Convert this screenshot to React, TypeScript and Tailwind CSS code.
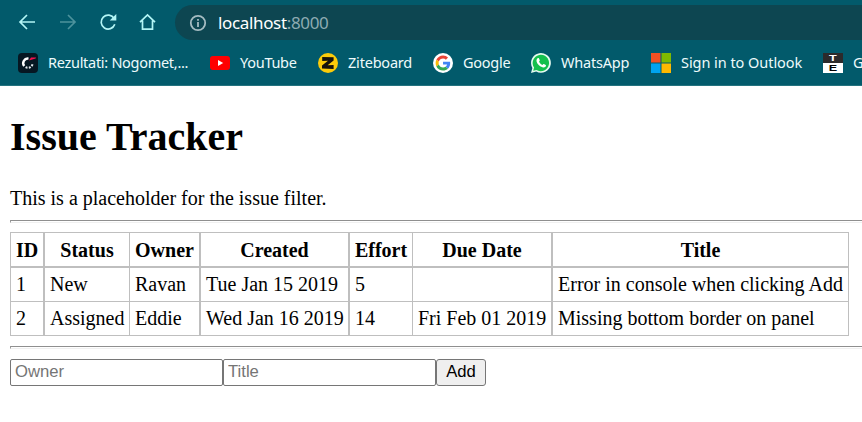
import React from "react";

const ui = "font-['Noto_Sans','Open_Sans',sans-serif]";

function Results() {
  return (
    <svg width="20" height="20" viewBox="0 0 20 20">
      <rect width="20" height="20" rx="4" fill="#061722" />
      <path d="M10.5 5.6A4.6 4.6 0 0 0 6.2 13" fill="none" stroke="#fff" strokeWidth="2.4" />
      <path d="M7.6 14.2A4.6 4.6 0 0 0 14.6 10" fill="none" stroke="#dfe6ea" strokeWidth="2" strokeDasharray="2 1.3" />
      <path d="M11 7.6L13 4.4H18.2L17.6 5.4Z" fill="#f5104f" />
    </svg>
  );
}

function YouTube() {
  return (
    <svg width="20" height="20" viewBox="0 0 20 20">
      <rect y="3" width="20" height="14" rx="3" fill="#f00" />
      <path d="M8 7L13.2 10L8 13Z" fill="#fff" />
    </svg>
  );
}

function Zite() {
  return (
    <svg width="20" height="20" viewBox="0 0 20 20">
      <circle cx="10" cy="10" r="10" fill="#fccb0a" />
      <path d="M4.2 4L15.6 4.3V7.4L9.6 12.3L15.6 12V16L4 15.6V12.6L10 7.8L4.2 8.1Z" fill="#17120c" />
    </svg>
  );
}

function Google() {
  return (
    <svg width="20" height="20" viewBox="0 0 20 20">
      <circle cx="10" cy="10" r="10" fill="#fff" />
      <g transform="translate(2.6 2.6) scale(.31)">
        <path fill="#EA4335" d="M24 9.5c3.54 0 6.71 1.22 9.21 3.6l6.85-6.85C35.9 2.38 30.47 0 24 0 14.62 0 6.51 5.38 2.56 13.22l7.98 6.19C12.43 13.72 17.74 9.5 24 9.5z" />
        <path fill="#4285F4" d="M46.98 24.55c0-1.57-.15-3.09-.38-4.55H24v9.02h12.94c-.58 2.96-2.26 5.48-4.78 7.18l7.73 6c4.51-4.18 7.09-10.36 7.09-17.65z" />
        <path fill="#FBBC05" d="M10.53 28.59c-.48-1.45-.76-2.99-.76-4.59s.27-3.14.76-4.59l-7.98-6.19C.92 16.46 0 20.12 0 24c0 3.88.92 7.54 2.56 10.78l7.97-6.19z" />
        <path fill="#34A853" d="M24 48c6.48 0 11.93-2.13 15.89-5.81l-7.73-6c-2.15 1.45-4.92 2.3-8.16 2.3-6.26 0-11.57-4.22-13.47-9.91l-7.98 6.19C6.51 42.62 14.62 48 24 48z" />
      </g>
    </svg>
  );
}

function WhatsApp() {
  return (
    <svg width="20" height="20" viewBox="0 0 20 20">
      <path d="M0 20L1.4 14.9A9.9 9.9 0 1 1 5.2 18.6Z" fill="#e6fbf0" />
      <path d="M2.2 17.8L3.1 14.6A8.2 8.2 0 1 1 5.5 16.9Z" fill="#14c04d" />
      <path d="M6.6 5.3C7.1 5 7.8 5 8 5.5L8.8 7.3C8.9 7.8 8.4 8.3 8 8.8C8.9 10.5 10 11.3 11.5 12C12 11.5 12.4 10.8 12.9 11L14.8 11.9C15.2 12.3 14.9 13.5 14.2 14C12.5 15.1 10 14.1 8 12.3C6 10.4 4.3 7.5 6.6 5.3Z" fill="#fff" />
    </svg>
  );
}

function Microsoft() {
  return (
    <svg width="20" height="20" viewBox="0 0 20 20">
      <rect width="9.5" height="9.5" fill="#f25022" />
      <rect x="10.5" width="9.5" height="9.5" fill="#7fba00" />
      <rect y="10.5" width="9.5" height="9.5" fill="#00a4ef" />
      <rect x="10.5" y="10.5" width="9.5" height="9.5" fill="#ffb900" />
    </svg>
  );
}

function TE() {
  return (
    <span className="flex h-5 w-5 flex-col font-['Liberation_Sans',sans-serif] text-[9px] leading-[10px] font-bold">
      <span className="flex h-[10px] justify-center bg-[#2c2a2b] text-white"><span className="scale-x-140">T</span></span>
      <span className="flex h-[10px] justify-center bg-white text-black"><span className="scale-x-140">E</span></span>
    </span>
  );
}

const bookmarks = [
  { label: "Rezultati: Nogomet,...", icon: <Results />, box: "w-[192px]", text: "tracking-[-0.29px]" },
  { label: "YouTube", icon: <YouTube />, box: "w-[108px]", text: "tracking-[-0.28px]" },
  { label: "Ziteboard", icon: <Zite />, box: "w-[115px]", text: "tracking-[-0.2px]" },
  { label: "Google", icon: <Google />, box: "w-[98px]", text: "tracking-[-0.25px]" },
  { label: "WhatsApp", icon: <WhatsApp />, box: "w-[120px]", text: "tracking-[-0.2px]" },
  { label: "Sign in to Outlook", icon: <Microsoft />, box: "w-[172px]", text: "tracking-[-0.05px]" },
  { label: "G", icon: <TE />, box: "w-[60px]", text: "" },
];

const columns = [
  { name: "ID", edge: "w-[34px] border-r-2" },
  { name: "Status", edge: "w-[85px] border-r" },
  { name: "Owner", edge: "w-[71px] border-r-2" },
  { name: "Created", edge: "w-[149px] border-r-2" },
  { name: "Effort", edge: "w-[63px] border-r" },
  { name: "Due Date", edge: "w-[140px] border-r-2" },
  { name: "Title", edge: "w-[296px] border-r" },
];

const issues = [
  ["1", "New", "Ravan", "Tue Jan 15 2019", "5", "", "Error in console when clicking Add"],
  ["2", "Assigned", "Eddie", "Wed Jan 16 2019", "14", "Fri Feb 01 2019", "Missing bottom border on panel"],
];

function Rule() {
  return <div className="h-[3px] border-t border-b border-l border-t-[#8f8f8f] border-b-[#f0f0f0] border-l-[#9a9a9a]" />;
}

export default function App() {
  return (
    <div className="h-[422px] w-[862px] overflow-hidden bg-white text-black">
      <header className={`h-[86px] border-b border-[#24737f] bg-[#025a6b] ${ui}`}>
        <div className="flex h-[45px] items-center">
          <svg className="shrink-0" width="175" height="45" fill="none" stroke="#b3f5f5" strokeWidth="1.7">
            <path d="M35 22H20.5M27 15L20 22L27 29" />
            <path d="M60 22H74.5M68 15L75 22L68 29" stroke="#4d929c" />
            <path d="M114.2 18.5A7 7 0 1 0 114.8 24.3" />
            <path d="M116.3 14V20.6H109.7Z" fill="#b3f5f5" stroke="none" />
            <path d="M140 22.2L147.5 15L155 22.2M142.5 20.5V29.2H152.5V20.5" />
          </svg>
          <div className="flex h-[35px] flex-1 items-center rounded-l-full bg-[#0d4651] pl-[14px]">
            <svg width="18" height="18" viewBox="0 0 18 18" fill="none" stroke="#a5bcc2" strokeWidth="1.8">
              <circle cx="9" cy="9" r="7.2" />
              <path d="M9 8V13M9 5V6.8" />
            </svg>
            <span className="ml-[11px] pb-px text-[17px] leading-none tracking-[-0.35px] whitespace-nowrap text-white">
              localhost<span className="text-[#8eabb1]">:8000</span>
            </span>
          </div>
        </div>
        <nav className="flex h-9 items-center pl-[18px]">
          {bookmarks.map((b) => (
            <div key={b.label} className={`flex shrink-0 items-center gap-[10px] ${b.box}`}>
              <span className="block h-5 w-5 shrink-0">{b.icon}</span>
              <span className={`pb-0.5 text-[14.5px] leading-[18px] whitespace-nowrap text-[#eefafb] ${b.text}`}>{b.label}</span>
            </div>
          ))}
        </nav>
      </header>
      <main className="pl-[10px] font-['Liberation_Serif',serif] text-[20px] leading-[23px]">
        <h1 className="pt-[28px] text-[40px] leading-[46px] font-bold">Issue Tracker</h1>
        <p className="pt-[27px] pb-[10px]">This is a placeholder for the issue filter.</p>
        <Rule />
        <table className="mt-[9px] w-[839px] table-fixed border-separate border-spacing-0 border-t border-l border-[#bfbfbf] whitespace-nowrap">
          <thead>
            <tr className="h-[35px]">
              {columns.map((c) => (
                <th key={c.name} className={`border-b-2 border-[#bfbfbf] p-0 pt-px ${c.edge}`}>{c.name}</th>
              ))}
            </tr>
          </thead>
          <tbody>
            {issues.map((row) => (
              <tr key={row[0]} className="h-[34px]">
                {row.map((value, i) => (
                  <td key={i} className={`border-b border-[#bfbfbf] py-0 pr-0 pl-[5px] ${columns[i].edge}`}>{value}</td>
                ))}
              </tr>
            ))}
          </tbody>
        </table>
        <div className="pt-[10px]"><Rule /></div>
        <form className="flex pt-[10px] font-['Liberation_Sans',sans-serif] text-[16.67px] leading-[19px]" onSubmit={(e) => e.preventDefault()}>
          <input placeholder="Owner" className="h-[27px] w-[213px] rounded-[2px] border border-[#767676] px-1 pb-0.5 placeholder:text-[#757575]" />
          <input placeholder="Title" className="h-[27px] w-[213px] rounded-[2px] border border-[#767676] px-1 pb-0.5 placeholder:text-[#757575]" />
          <button className="h-[27px] w-[50px] rounded-[3px] border border-[#767676] bg-[#efefef] pb-0.5">Add</button>
        </form>
      </main>
    </div>
  );
}
